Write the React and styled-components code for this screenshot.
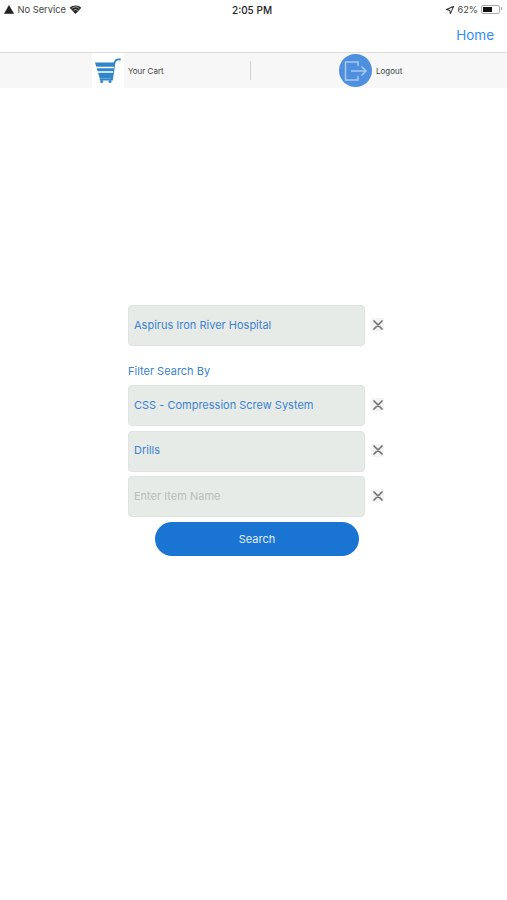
import React from 'react';
import styled, { createGlobalStyle } from 'styled-components';

const GlobalStyle = createGlobalStyle`
    html, body {
        margin: 0;
        padding: 0;
        background: #fff;
    }
    body {
        font-family: "Inter", "Liberation Sans", sans-serif;
    }
`;

function SignalWarning() {
    return (
        <svg width="10" height="9" viewBox="0 0 10 9">
            <path d="M5 0.5 L9.6 8.6 L0.4 8.6 Z" fill="#222" stroke="#222" strokeWidth="0.6" strokeLinejoin="round" />
        </svg>
    );
}

function Wifi() {
    return (
        <svg width="13" height="9" viewBox="0 0 14 10">
            <path d="M7 10 L0.5 3 A9.5 9.5 0 0 1 13.5 3 Z" fill="#222" />
            <path d="M2.8 3.9 A6.4 6.4 0 0 1 11.2 3.9" stroke="#fff" strokeWidth="0.7" fill="none" />
            <path d="M4.6 6 A3.6 3.6 0 0 1 9.4 6" stroke="#fff" strokeWidth="0.7" fill="none" />
        </svg>
    );
}

function Arrow() {
    return (
        <svg width="8" height="8" viewBox="0 0 10 10">
            <path d="M9.5 0.5 L0.5 4.5 L4.6 5.4 L5.5 9.5 Z" fill="none" stroke="#333" strokeWidth="1.3" strokeLinejoin="round" />
        </svg>
    );
}

function Battery() {
    return (
        <BatteryShell>
            <BatteryFill />
        </BatteryShell>
    );
}

function CartIcon() {
    return (
        <svg width="28" height="25" viewBox="0 0 28 25">
            <path d="M26 1.5 C22.5 1 21 2.5 20.4 5 L18 21.5 L6.5 21.5" fill="none" stroke="#2f86c8" strokeWidth="1.8" strokeLinecap="round" />
            <path d="M1 4.5 H21 L18 20.5 H5.8 Z" fill="#2f86c8" />
            <path d="M2 9.5 H20 M3.2 14 H19" stroke="#fff" strokeWidth="1.5" />
            <circle cx="7.7" cy="23.5" r="1.5" fill="#2f86c8" />
            <circle cx="16" cy="23.5" r="1.5" fill="#2f86c8" />
        </svg>
    );
}

function LogoutIcon() {
    return (
        <svg width="24" height="20" viewBox="0 0 24 20">
            <path d="M14 5 V1 H1.5 V19 H14 V15" fill="none" stroke="#a9caf1" strokeWidth="1.5" />
            <path d="M7 10 H22 M17.5 5.5 L22 10 L17.5 14.5" fill="none" stroke="#a9caf1" strokeWidth="1.5" />
        </svg>
    );
}

function ClearIcon() {
    return (
        <ClearBox>
            <svg width="10" height="10" viewBox="0 0 10 10">
                <path d="M1 1 L9 9 M9 1 L1 9" stroke="#717171" strokeWidth="1.7" strokeLinecap="round" />
            </svg>
        </ClearBox>
    );
}

function Field({ value, placeholder }) {
    return (
        <FieldRow>
            <FieldBox $placeholder={!value}>{value || placeholder}</FieldBox>
            <ClearIcon />
        </FieldRow>
    );
}

function App() {
    return (
        <Page>
            <GlobalStyle />
            <StatusBar>
                <StatusSide>
                    <SignalWarning />
                    <span>No Service</span>
                    <Wifi />
                </StatusSide>
                <Clock>2:05 PM</Clock>
                <StatusSide $right>
                    <Arrow />
                    <span>62%</span>
                    <Battery />
                </StatusSide>
            </StatusBar>
            <NavBar>
                <HomeLink>Home</HomeLink>
            </NavBar>
            <TabBar>
                <Tab>
                    <CartBox>
                        <CartIcon />
                    </CartBox>
                    <TabLabel>Your Cart</TabLabel>
                </Tab>
                <Divider />
                <Tab $logout>
                    <LogoutCircle>
                        <LogoutIcon />
                    </LogoutCircle>
                    <TabLabel>Logout</TabLabel>
                </Tab>
            </TabBar>
            <Main>
                <Field value="Aspirus Iron River Hospital" />
                <FilterLabel>Filter Search By</FilterLabel>
                <Fields>
                    <Field value="CSS - Compression Screw System" />
                    <Field value="Drills" />
                    <Field placeholder="Enter Item Name" />
                </Fields>
                <SearchButton>Search</SearchButton>
            </Main>
        </Page>
    );
}

const Page = styled.div`
    width: 507px;
    height: 900px;
    overflow: hidden;
    background: #fff;
`;

const StatusBar = styled.div`
    height: 19px;
    padding: 0 7px 0 4px;
    display: grid;
    grid-template-columns: 1fr auto 1fr;
    align-items: center;
    font-size: 9.3px;
    color: #444;
`;

const StatusSide = styled.div`
    display: flex;
    align-items: center;
    gap: ${props => (props.$right ? '3px' : '3.5px')};
    justify-content: ${props => (props.$right ? 'flex-end' : 'flex-start')};
`;

const Clock = styled.div`
    font-size: 10px;
    font-weight: 500;
    color: #222;
`;

const BatteryShell = styled.div`
    position: relative;
    width: 19px;
    height: 9px;
    border: 1px solid #aaa;
    border-radius: 2px;
    padding: 1px;
    box-sizing: border-box;

    &::after {
        content: '';
        position: absolute;
        top: 1px;
        right: -3px;
        width: 1px;
        height: 3px;
        background: #aaa;
    }
`;

const BatteryFill = styled.div`
    width: 62%;
    height: 100%;
    background: #111;
`;

const NavBar = styled.div`
    height: 33px;
    box-sizing: content-box;
    padding: 0 13px;
    display: flex;
    align-items: center;
    justify-content: flex-end;
    border-bottom: 1px solid #dcdcdc;
`;

const HomeLink = styled.a`
    font-size: 13.5px;
    line-height: 16px;
    margin-bottom: 2px;
    color: #2f8df5;
`;

const TabBar = styled.div`
    height: 35px;
    display: grid;
    grid-template-columns: 250px 1px 1fr;
    align-items: center;
    background: #f7f7f7;
`;

const Tab = styled.div`
    height: 100%;
    display: flex;
    align-items: center;
    padding-left: ${props => (props.$logout ? '88px' : '92px')};
`;

const CartBox = styled.div`
    width: 32px;
    height: 35px;
    background: #fff;
    display: flex;
    align-items: center;
    justify-content: center;
    margin-right: 4px;
`;

const LogoutCircle = styled.div`
    width: 33px;
    height: 33px;
    border-radius: 50%;
    background: #4f8fe0;
    display: flex;
    align-items: center;
    justify-content: center;
    margin-right: 4px;
`;

const TabLabel = styled.span`
    font-size: 8px;
    color: #444;
`;

const Divider = styled.div`
    width: 1px;
    height: 19px;
    background: #d2d2d2;
`;

const Main = styled.main`
    padding: 217px 0 0 128px;
    display: flex;
    flex-direction: column;
`;

const Fields = styled.div`
    display: flex;
    flex-direction: column;
    gap: 4.5px;
`;

const FieldRow = styled.div`
    display: flex;
    align-items: center;
    gap: 6px;
`;

const FieldBox = styled.div`
    width: 237px;
    height: 41px;
    box-sizing: border-box;
    padding: 0 0 2px 5px;
    display: flex;
    align-items: center;
    background: #e6ebe7;
    border: 1px solid #dfe4e0;
    border-radius: 4px;
    font-size: 11px;
    color: ${props => (props.$placeholder ? '#b9bdbb' : '#3b82cf')};
`;

const ClearBox = styled.div`
    width: 13px;
    height: 13px;
    margin-bottom: 2px;
    background: #f3f3f3;
    border-radius: 2px;
    display: flex;
    align-items: center;
    justify-content: center;
`;

const FilterLabel = styled.div`
    height: 39px;
    box-sizing: border-box;
    padding-top: 18px;
    font-size: 11px;
    line-height: 14px;
    color: #3b82cf;
`;

const SearchButton = styled.button`
    width: 204px;
    height: 34px;
    margin: 5px 0 0 27px;
    padding: 0;
    border: none;
    border-radius: 17px;
    background: #1a75d2;
    color: #e3eefa;
    font-size: 11px;
    font-family: "Inter", "Liberation Sans", sans-serif;
`;

export default App;
